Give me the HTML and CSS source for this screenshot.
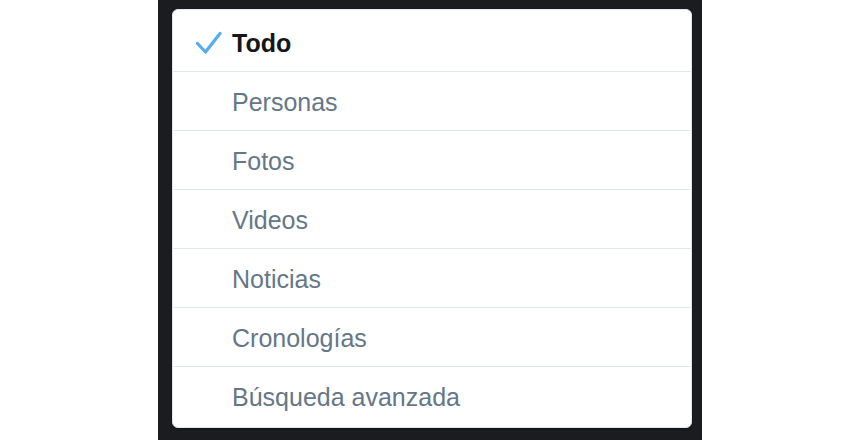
FILE: index.html
```html
<!DOCTYPE html>
<html>
<head>
  <title>Buscar</title>
  <link rel="stylesheet" href="styles.css">
</head>

<body>
  <div class="backdrop">
    <ul class="filter-menu">
      <li class="filter-item selected">
        <span class="mark">
          <svg width="26" height="26" viewBox="0 0 26 26">
            <path d="M1.5 13.5 L9.5 22 L24 3.5" fill="none" stroke="#55acee" stroke-width="3.2" stroke-linecap="round" stroke-linejoin="round"/>
          </svg>
        </span>
        Todo
      </li>
      <li class="filter-item"><span class="mark"></span>Personas</li>
      <li class="filter-item"><span class="mark"></span>Fotos</li>
      <li class="filter-item"><span class="mark"></span>Videos</li>
      <li class="filter-item"><span class="mark"></span>Noticias</li>
      <li class="filter-item"><span class="mark"></span>Cronologías</li>
      <li class="filter-item"><span class="mark"></span>Búsqueda avanzada</li>
    </ul>
  </div>
</body>
</html>
```

FILE: styles.css
```css
body {
  font-family: 'Liberation Sans', Arial, sans-serif;
  background-color: #fff;
  margin: 0;
  padding: 0;
}

/* dark strip behind the dropdown */
.backdrop {
  width: 544px;
  height: 440px;
  margin-left: 158px;
  background-color: #1b1c20;
  padding: 9px 10px 0 14px;
  box-sizing: border-box;
}

.filter-menu {
  list-style: none;
  margin: 0;
  padding: 3px 0 2px;
  background-color: #fff;
  border: 1px solid #e1e8ed;
  border-radius: 6px;
  box-shadow: 0 1px 2px rgba(0, 0, 0, 0.35);
}

.filter-item {
  display: flex;
  align-items: center;
  box-sizing: content-box;
  height: 56px;
  padding: 2px 0 0 23px;
  font-size: 25px;
  color: #657786;
  border-bottom: 1px solid #e1e8ed;
}

.filter-item:last-child {
  border-bottom: none;
}

.filter-item.selected {
  font-weight: bold;
  color: #14171a;
}

.mark {
  width: 36px;
  flex-shrink: 0;
  display: flex;
  align-items: center;
}
```
